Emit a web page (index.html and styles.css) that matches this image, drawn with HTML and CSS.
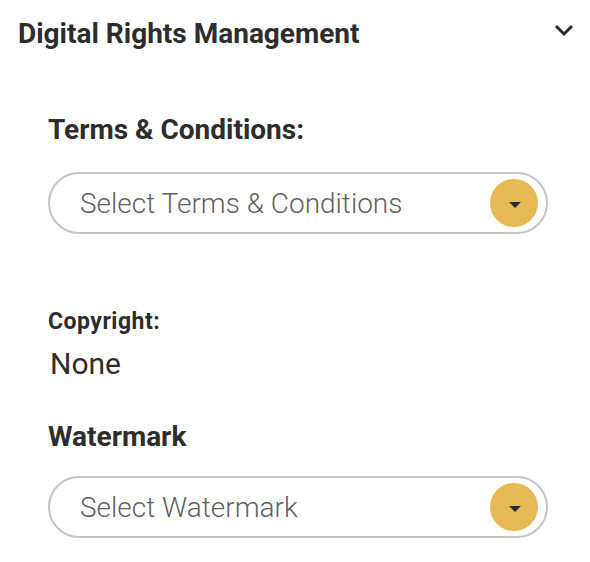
FILE: index.html
```html
<!DOCTYPE html>
<html>
<head>
<meta charset="utf-8">
<link rel="stylesheet" href="styles.css">
</head>
<body>
<div class="panel">
  <div class="panel-header">
    <h2 class="panel-title">Digital Rights Management</h2>
    <svg class="chevron" width="20" height="14" viewBox="0 0 20 14"><path d="M2 2 L10 10 L18 2" fill="none" stroke="#2b2b2b" stroke-width="3"/></svg>
  </div>
  <div class="panel-body">
    <div class="field field-terms">
      <label class="field-label">Terms &amp; Conditions:</label>
      <div class="select">
        <span class="select-text">Select Terms &amp; Conditions</span>
        <span class="select-btn"><svg class="caret" width="12" height="6" viewBox="0 0 12 6"><path d="M0 0 H12 L6 6 Z" fill="#2b2b2b"/></svg></span>
      </div>
    </div>
    <div class="field field-copyright">
      <div class="small-label">Copyright:</div>
      <div class="value">None</div>
    </div>
    <div class="field field-watermark">
      <label class="field-label">Watermark</label>
      <div class="select">
        <span class="select-text">Select Watermark</span>
        <span class="select-btn"><svg class="caret" width="12" height="6" viewBox="0 0 12 6"><path d="M0 0 H12 L6 6 Z" fill="#2b2b2b"/></svg></span>
      </div>
    </div>
  </div>
</div>
</body>
</html>
```

FILE: styles.css
```css
* { box-sizing: border-box; }
html, body { margin: 0; padding: 0; background: #fff; }
body { font-family: Roboto, "Liberation Sans", sans-serif; color: #2d2d2d; }
.panel { width: 590px; }
.panel-header {
  display: flex;
  align-items: flex-start;
  justify-content: space-between;
  padding: 17px 16px 0 18px;
}
.panel-title {
  margin: 0;
  font-size: 28px;
  font-weight: 700;
  line-height: 34px;
}
.chevron { margin-top: 7px; }
.panel-body { padding: 0 42px 0 48px; }
.field-terms { margin-top: 62px; }
.field-label {
  display: block;
  font-size: 28px;
  font-weight: 700;
  line-height: 34px;
}
.select {
  margin-top: 25px;
  height: 62px;
  border: 2px solid #c4c4c4;
  border-radius: 31px;
  display: flex;
  align-items: center;
  justify-content: space-between;
  padding: 0 8px 0 30px;
}
.select-text {
  font-size: 28px;
  color: #616161;
  font-weight: 300;
}
.select-btn {
  width: 48px;
  height: 48px;
  border-radius: 50%;
  background: #e7b955;
  display: flex;
  align-items: center;
  justify-content: center;
}
.caret { margin-top: 4px; margin-left: 1px; }
.field-copyright { margin-top: 74px; }
.small-label { font-size: 23px; font-weight: 700; line-height: 28px; letter-spacing: 0.5px; }
.value { font-size: 30px; line-height: 36px; margin-top: 10px; padding-left: 2px; }
.field-watermark { margin-top: 38px; }
.field-watermark .select { margin-top: 22px; }
```
